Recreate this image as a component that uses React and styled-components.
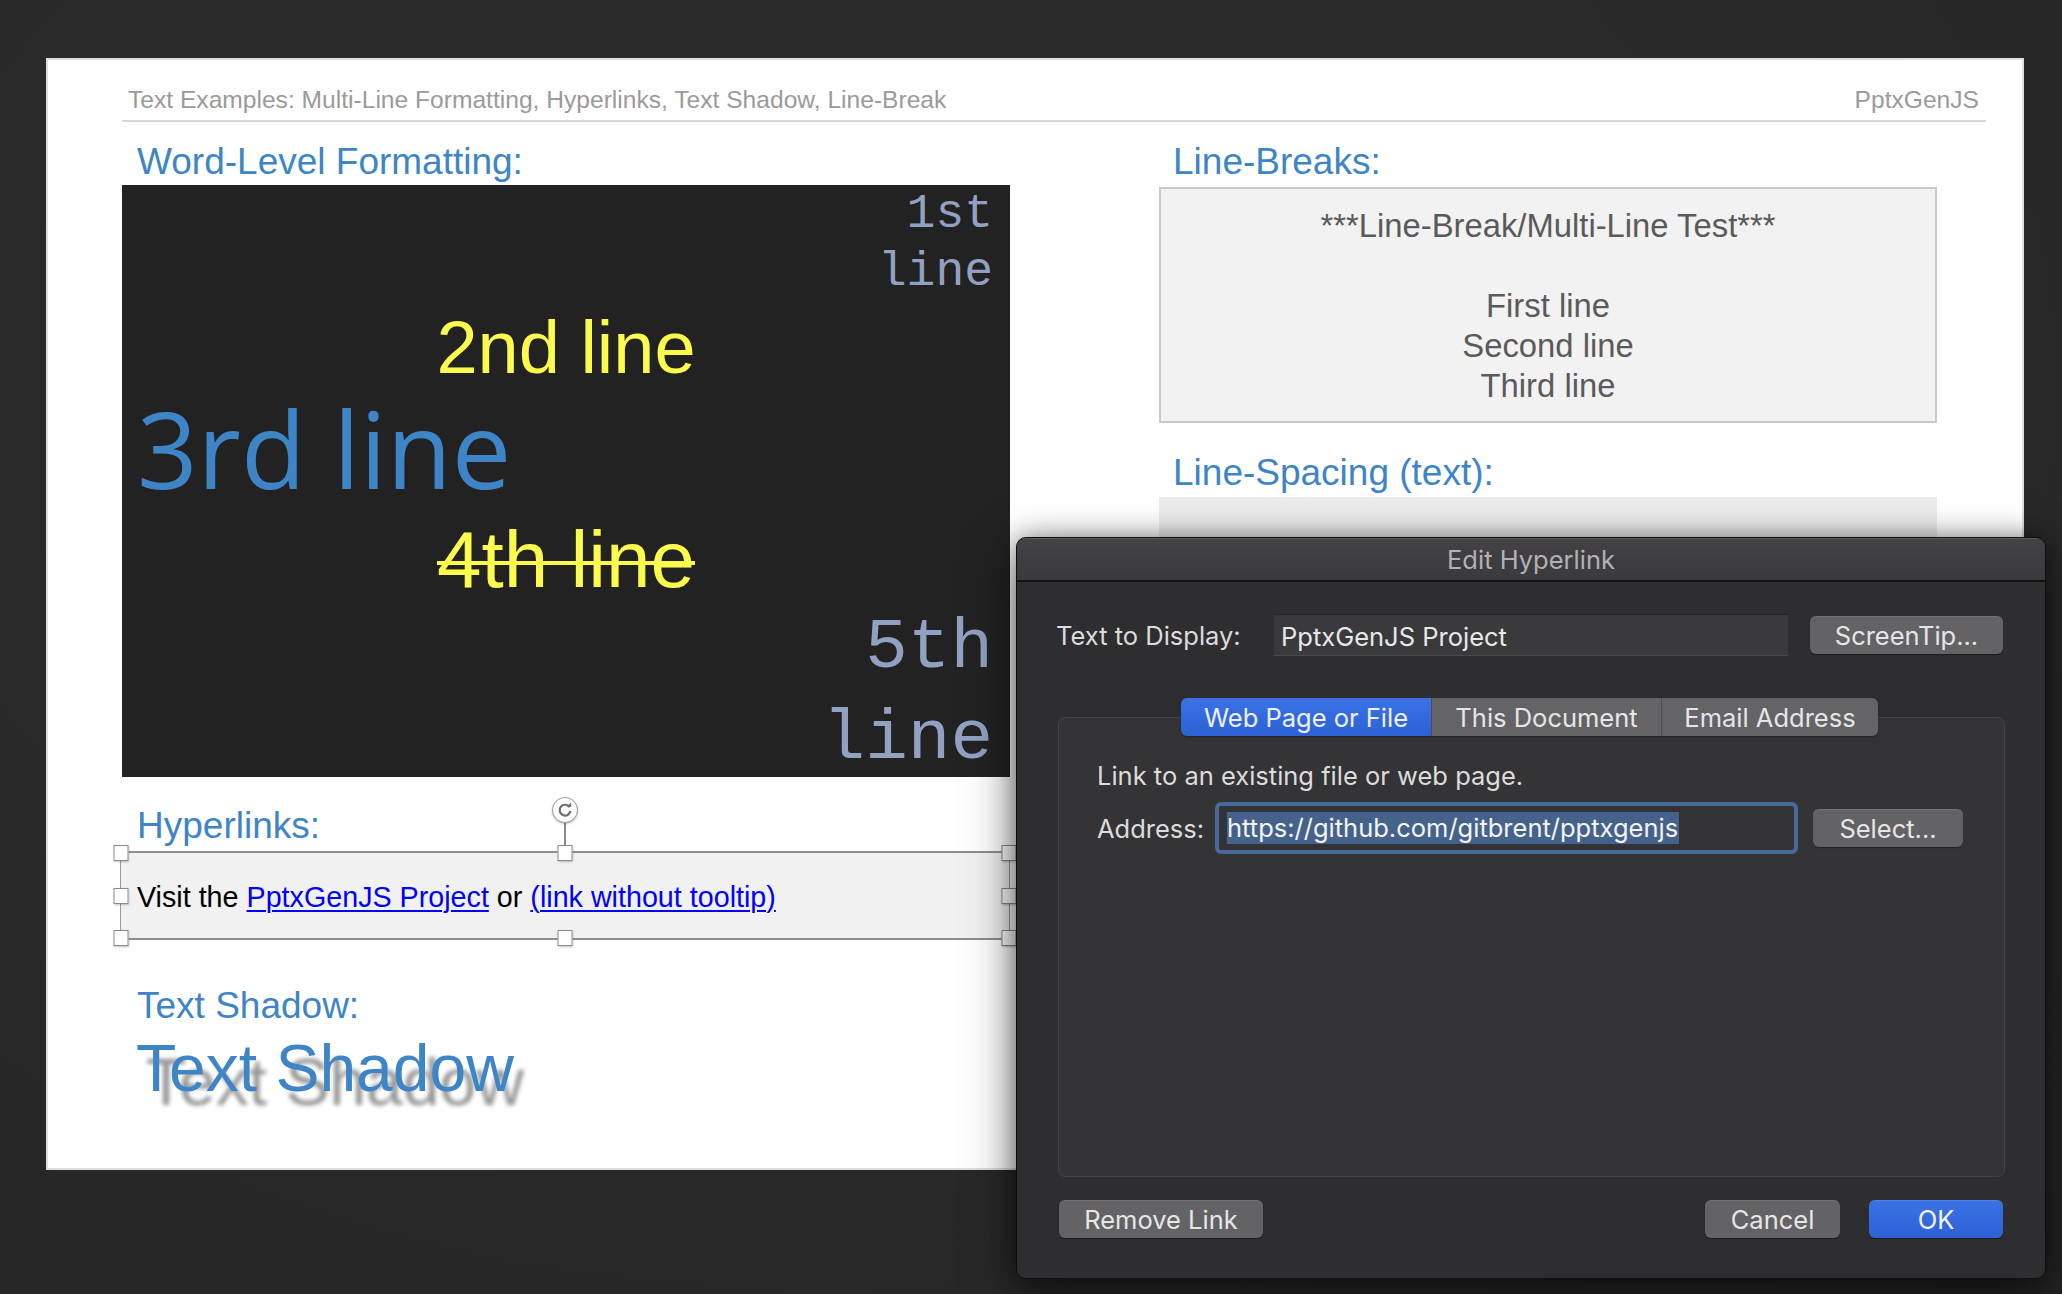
import React from 'react'
import styled, { createGlobalStyle } from 'styled-components'

const GlobalStyle = createGlobalStyle`
  html, body {
    margin: 0;
    padding: 0;
    background: #2a2a2a;
  }
  body {
    font-family: 'Liberation Sans', Arial, sans-serif;
  }
`

const Desktop = styled.div`
  position: relative;
  width: 2062px;
  height: 1294px;
  box-sizing: border-box;
  padding: 58px 0 0 46px;
  overflow: hidden;
  background: radial-gradient(ellipse at 40% 30%, #2d2d2d 0%, #282828 70%, #242424 100%);
`

/* ---------- slide ---------- */

const Slide = styled.div`
  width: 1978px;
  height: 1112px;
  box-sizing: border-box;
  background: #fff;
  border: 2px solid #dedede;
  padding: 0 36px 0 74px;
  overflow: hidden;
  font-family: 'Liberation Sans', Arial, sans-serif;
`

const SlideHeader = styled.div`
  display: flex;
  justify-content: space-between;
  padding: 26px 7px 6px 6px;
  border-bottom: 2px solid #d6d6d6;
  font-size: 24.6px;
  line-height: 28px;
  color: #9a9a9a;
`

const Columns = styled.div`
  display: flex;
  gap: 149px;
`

const Column = styled.div`
  width: ${p => p.$w}px;
  display: flex;
  flex-direction: column;
`

const Heading = styled.div`
  margin-top: ${p => p.$mt}px;
  padding-left: ${p => p.$pl || 15}px;
  font-size: 37px;
  line-height: 44px;
  color: #3d85c6;
  white-space: nowrap;
`

const DarkBox = styled.div`
  margin-top: 1px;
  height: 592px;
  background: #222;
  display: flex;
  flex-direction: column;
`

const fonts = {
  mono: "'Liberation Mono', 'Courier New', monospace",
  sans: "'Liberation Sans', Arial, sans-serif",
  open: "'Open Sans', 'DejaVu Sans', sans-serif",
}

const WordLine = styled.div`
  flex: none;
  font-family: ${p => fonts[p.$font]};
  font-size: ${p => p.$size}px;
  line-height: ${p => p.$lh}px;
  color: ${p => p.$color};
  text-align: ${p => p.$align};
  text-decoration: ${p => (p.$strike ? 'line-through' : 'none')};
  text-decoration-thickness: 4px;
  padding: 0 ${p => (p.$align === 'right' ? 17 : 0)}px 0 ${p => (p.$align === 'left' ? 15 : 0)}px;
  margin-top: ${p => p.$mt || 0}px;
  white-space: ${p => (p.$wrap ? 'normal' : 'nowrap')};

  span {
    display: inline-block;
    width: min-content;
    text-align: right;
  }
`

const LinkBox = styled.div`
  position: relative;
  margin: 3px 0 0 -2px;
  width: 890px;
  height: 89px;
  box-sizing: border-box;
  background: #f1f1f1;
  border-top: 2px solid #8d8d8d;
  border-bottom: 2px solid #8d8d8d;
  border-left: 1px solid #9a9a9a;
  border-right: 1px solid #9a9a9a;
  display: flex;
  align-items: center;
  padding: 3px 0 0 16px;
  font-size: 28.7px;
  color: #000;
  white-space: nowrap;

  a {
    color: #0000ff;
    text-decoration: underline;
    text-decoration-thickness: 2px;
    text-underline-offset: 3px;
  }
`

const Handle = styled.span`
  position: absolute;
  left: ${p => p.$x};
  top: ${p => p.$y};
  width: 13px;
  height: 14px;
  background: #fff;
  border: 1px solid #8a8a8a;
  box-shadow: 0 1px 2px rgba(0, 0, 0, 0.25);
  transform: translate(-50%, -50%);
`

const RotateStem = styled.span`
  position: absolute;
  left: 50%;
  top: -32px;
  width: 2px;
  height: 26px;
  background: #8a8a8a;
  transform: translateX(-50%);
`

const RotateKnob = styled.span`
  position: absolute;
  left: 50%;
  top: -56px;
  width: 24px;
  height: 24px;
  border-radius: 50%;
  background: #fff;
  border: 1px solid #9a9a9a;
  box-shadow: 0 1px 2px rgba(0, 0, 0, 0.25);
  transform: translateX(-50%);
  display: flex;
  align-items: center;
  justify-content: center;
`

const ShadowText = styled.div`
  padding-left: 14px;
  font-size: 66px;
  line-height: 80px;
  color: #3d85c6;
  white-space: nowrap;
  text-shadow: 10px 14px 4px rgba(0, 0, 0, 0.42);
`

const BreakBox = styled.div`
  margin-top: 3px;
  height: 236px;
  box-sizing: border-box;
  border: 2px solid #c9c9c9;
  background: #f2f2f2;
  padding-top: 17px;
  text-align: center;
  font-size: 32.8px;
  line-height: 40px;
  color: #5a5a5a;
`

const SpacingBox = styled.div`
  margin-top: 2px;
  height: 400px;
  background: #ececec;
`

/* ---------- dialog ---------- */

const Dialog = styled.div`
  position: absolute;
  left: 1016px;
  top: 537px;
  width: 1030px;
  height: 742px;
  box-sizing: border-box;
  border: 1px solid #0f0f0f;
  border-radius: 10px;
  background: #2e2d30;
  box-shadow: 0 16px 50px rgba(0, 0, 0, 0.55), 0 0 22px rgba(0, 0, 0, 0.35);
  overflow: hidden;
  display: flex;
  flex-direction: column;
  font-family: Inter, 'Noto Sans', sans-serif;
  font-size: 25.5px;
  color: #dedede;
`

const TitleBar = styled.div`
  height: 42px;
  flex: none;
  border-bottom: 2px solid #131313;
  background: linear-gradient(#444246, #3a393c);
  box-shadow: inset 0 1px 0 rgba(255, 255, 255, 0.14);
  display: flex;
  align-items: center;
  justify-content: center;
  color: #b2b2b2;
  font-size: 25.5px;
`

const Body = styled.div`
  flex: 1;
  display: flex;
  flex-direction: column;
  padding: 32px 42px 0 39px;
`

const Row = styled.div`
  display: flex;
  align-items: center;
  margin-top: ${p => p.$mt || 0}px;
  height: ${p => p.$h}px;
`

const Label = styled.div`
  width: ${p => p.$w}px;
  flex: none;
  color: #dcdcdc;
  white-space: nowrap;
`

const TextField = styled.div`
  width: 514px;
  height: 42px;
  box-sizing: border-box;
  background: #3a393c;
  border-top: 1px solid #252427;
  border-bottom: 1px solid #4a494c;
  display: flex;
  align-items: center;
  padding: 2px 0 0 7px;
  color: #e8e8e8;
`

const Button = styled.div`
  width: ${p => p.$w}px;
  height: 38px;
  flex: none;
  margin-left: ${p => p.$ml || 0}px;
  border-radius: 6px;
  background: ${p => (p.$primary ? 'linear-gradient(#3a72e6, #2d61d5)' : '#636265')};
  box-shadow: 0 1px 1px rgba(0, 0, 0, 0.4), inset 0 1px 0 rgba(255, 255, 255, 0.1);
  color: ${p => (p.$primary ? '#f2f5ff' : '#e6e6e6')};
  display: flex;
  align-items: center;
  justify-content: center;
  white-space: nowrap;
`

const GroupWrap = styled.div`
  margin-top: 42px;
  display: flex;
  flex-direction: column;
  align-items: center;
`

const Segmented = styled.div`
  position: relative;
  z-index: 1;
  display: flex;
  height: 38px;
  margin-bottom: -19px;
  border-radius: 6px;
  overflow: hidden;
  box-shadow: 0 1px 2px rgba(0, 0, 0, 0.4);
`

const Segment = styled.div`
  width: ${p => p.$w}px;
  display: flex;
  align-items: center;
  justify-content: center;
  background: ${p => (p.$active ? 'linear-gradient(#3a72e6, #2d61d5)' : '#646366')};
  color: ${p => (p.$active ? '#eef2ff' : '#e6e6e6')};
  border-left: ${p => (p.$first ? 'none' : '1px solid #4d4c4f')};
  white-space: nowrap;
`

const GroupBox = styled.div`
  align-self: stretch;
  margin: 0 -2px 0 2px;
  height: 460px;
  box-sizing: border-box;
  border: 1px solid #444346;
  border-radius: 7px;
  background: #343336;
  padding: 43px 0 0 38px;
  display: flex;
  flex-direction: column;
`

const Hint = styled.div`
  line-height: 30px;
  color: #dcdcdc;
`

const AddressField = styled.div`
  width: 583px;
  height: 52px;
  flex: none;
  box-sizing: border-box;
  border: 4px solid #47699a;
  border-radius: 6px;
  background: #333236;
  display: flex;
  align-items: center;
  padding-left: 8px;

  span {
    background: #45628b;
    color: #f4f4f4;
    line-height: 32px;
    padding-right: 1px;
  }
`

const Footer = styled.div`
  margin: 23px 0 0 3px;
  display: flex;
  align-items: center;
`

const Spacer = styled.div`
  flex: 1;
`

function RotateIcon() {
  return (
    <svg width="16" height="16" viewBox="0 0 16 16">
      <path d="M12.6 5.2A5.4 5.4 0 1 0 13.4 9" fill="none" stroke="#6e6e6e" strokeWidth="2.2" />
      <path d="M9.6 4.8h4.6V0.4z" fill="#6e6e6e" />
    </svg>
  )
}

export default function App() {
  return (
    <Desktop>
      <GlobalStyle />
      <Slide>
        <SlideHeader>
          <span>Text Examples: Multi-Line Formatting, Hyperlinks, Text Shadow, Line-Break</span>
          <span>PptxGenJS</span>
        </SlideHeader>
        <Columns>
          <Column $w={888}>
            <Heading $mt={18}>Word-Level Formatting:</Heading>
            <DarkBox>
              <WordLine $font="mono" $size={48} $lh={58} $color="#92a1c2" $align="right" $wrap>
                <span>1st line</span>
              </WordLine>
              <WordLine $font="sans" $size={74} $lh={90} $color="#fbfb4e" $align="center" $mt={2}>
                2nd line
              </WordLine>
              <WordLine $font="open" $size={106} $lh={110} $color="#3d85c6" $align="left">
                3rd line
              </WordLine>
              <WordLine $font="sans" $size={80} $lh={90} $color="#fbfb4e" $align="center" $mt={12} $strike>
                4th line
              </WordLine>
              <WordLine $font="mono" $size={71} $lh={91} $color="#92a1c2" $align="right" $wrap $mt={-2}>
                <span>5th line</span>
              </WordLine>
            </DarkBox>

            <Heading $mt={27}>Hyperlinks:</Heading>
            <LinkBox>
              <RotateStem />
              <RotateKnob>
                <RotateIcon />
              </RotateKnob>
              <Handle $x="0%" $y="0%" />
              <Handle $x="50%" $y="0%" />
              <Handle $x="100%" $y="0%" />
              <Handle $x="0%" $y="50%" />
              <Handle $x="100%" $y="50%" />
              <Handle $x="0%" $y="100%" />
              <Handle $x="50%" $y="100%" />
              <Handle $x="100%" $y="100%" />
              <span>
                Visit the <a href="https://github.com/gitbrent/pptxgenjs">PptxGenJS Project</a> or{' '}
                <a href="https://github.com/gitbrent/pptxgenjs">(link without tooltip)</a>
              </span>
            </LinkBox>

            <Heading $mt={44}>Text Shadow:</Heading>
            <ShadowText>Text Shadow</ShadowText>
          </Column>

          <Column $w={778}>
            <Heading $mt={18} $pl={14}>Line-Breaks:</Heading>
            <BreakBox>
              <div>***Line-Break/Multi-Line Test***</div>
              <div>&nbsp;</div>
              <div>First line</div>
              <div>Second line</div>
              <div>Third line</div>
            </BreakBox>
            <Heading $mt={28} $pl={14}>Line-Spacing (text):</Heading>
            <SpacingBox />
          </Column>
        </Columns>
      </Slide>

      <Dialog>
        <TitleBar>Edit Hyperlink</TitleBar>
        <Body>
          <Row $h={42}>
            <Label $w={218}>Text to Display:</Label>
            <TextField>PptxGenJS Project</TextField>
            <Button $w={193} $ml={22}>ScreenTip...</Button>
          </Row>

          <GroupWrap>
            <Segmented>
              <Segment $w={250} $active $first>Web Page or File</Segment>
              <Segment $w={229}>This Document</Segment>
              <Segment $w={216}>Email Address</Segment>
            </Segmented>
            <GroupBox>
              <Hint>Link to an existing file or web page.</Hint>
              <Row $h={52} $mt={11}>
                <Label $w={118}>Address:</Label>
                <AddressField>
                  <span>https://github.com/gitbrent/pptxgenjs</span>
                </AddressField>
                <Button $w={150} $ml={15}>Select...</Button>
              </Row>
            </GroupBox>
          </GroupWrap>

          <Footer>
            <Button $w={204}>Remove Link</Button>
            <Spacer />
            <Button $w={135}>Cancel</Button>
            <Button $w={134} $ml={29} $primary>OK</Button>
          </Footer>
        </Body>
      </Dialog>
    </Desktop>
  )
}
